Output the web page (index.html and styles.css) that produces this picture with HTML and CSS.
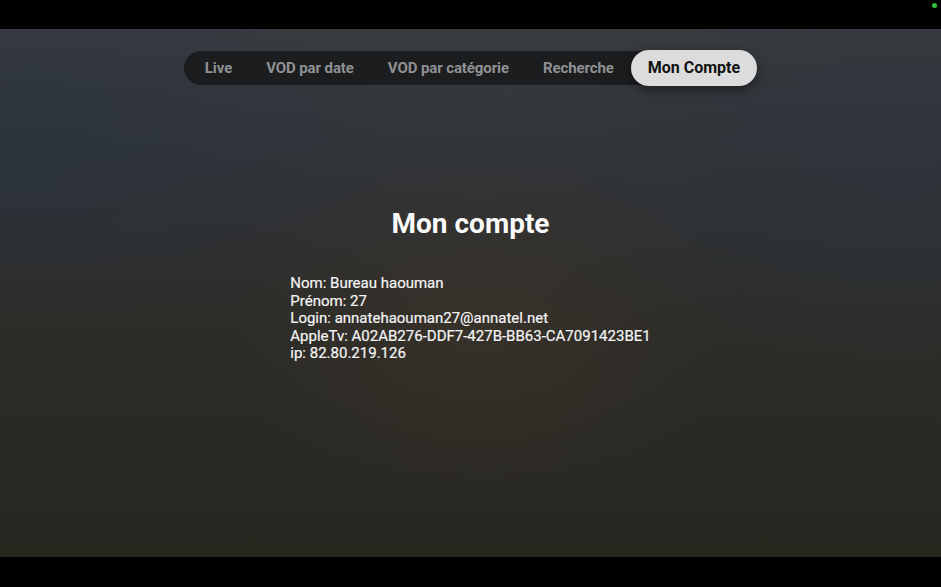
FILE: index.html
```html
<!DOCTYPE html>
<html lang="fr">
<head>
<meta charset="utf-8">
<title>Mon compte</title>
<link rel="stylesheet" href="styles.css">
</head>
<body>
<div class="screen">
  <div class="bar-top"><span class="dot"></span></div>
  <main class="stage">
    <nav class="tabs">
      <span class="tab">Live</span>
      <span class="tab">VOD par date</span>
      <span class="tab">VOD par catégorie</span>
      <span class="tab">Recherche</span>
      <span class="tab active">Mon Compte</span>
    </nav>
    <h1 class="title">Mon compte</h1>
    <div class="info">
      <div>Nom: Bureau haouman</div>
      <div>Prénom: 27</div>
      <div>Login: annatehaouman27@annatel.net</div>
      <div>AppleTv: A02AB276-DDF7-427B-BB63-CA7091423BE1</div>
      <div>ip: 82.80.219.126</div>
    </div>
  </main>
  <div class="bar-bottom"></div>
</div>
</body>
</html>
```
FILE: styles.css
```css
html, body {
  margin: 0;
  padding: 0;
  background: #000;
}
.screen {
  width: 941px;
  height: 587px;
  display: flex;
  flex-direction: column;
  font-family: Roboto, "Noto Sans", sans-serif;
  overflow: hidden;
}
.bar-top {
  height: 29px;
  background: #000;
  position: relative;
  flex: none;
}
.dot {
  position: absolute;
  right: 4px;
  top: 3px;
  width: 5px;
  height: 5px;
  border-radius: 50%;
  background: #2fc23a;
}
.bar-bottom {
  height: 30px;
  background: #000;
  flex: none;
}
.stage {
  flex: 1;
  display: flex;
  flex-direction: column;
  align-items: center;
  background:
    radial-gradient(ellipse 360px 260px at 480px 300px, rgba(62, 54, 42, 0.55), rgba(62, 54, 42, 0) 70%),
    radial-gradient(ellipse 500px 220px at 0px 120px, rgba(40, 50, 62, 0.6), rgba(40, 50, 62, 0) 80%),
    radial-gradient(ellipse 420px 260px at 900px 150px, rgba(44, 52, 60, 0.6), rgba(44, 52, 60, 0) 80%),
    linear-gradient(180deg, #383c41 0%, #32353a 22%, #2d2c29 55%, #27261f 100%);
}
.tabs {
  margin-top: 22px;
  display: flex;
  align-items: center;
  height: 34px;
  background: #1b1d1f;
  border-radius: 17px;
  padding-left: 4px;
}
.tab {
  padding: 0 17px;
  font-size: 15px;
  font-weight: 700;
  letter-spacing: -0.1px;
  color: #8f9193;
  line-height: 34px;
  white-space: nowrap;
}
.tab.active {
  background: #dcdcdc;
  color: #121212;
  font-size: 16px;
  letter-spacing: 0;
  border-radius: 18px;
  height: 36px;
  line-height: 36px;
  padding: 0 17px 0 17px;
  box-shadow: 0 4px 12px rgba(0, 0, 0, 0.45);
}
.title {
  margin: 122px 0 0;
  font-size: 28px;
  font-weight: 700;
  color: #fafafa;
  line-height: 34px;
}
.info {
  margin-top: 34px;
  font-size: 15px;
  font-weight: 400;
  color: #f4f4f4;
  line-height: 17.5px;
  -webkit-text-stroke: 0.2px #f4f4f4;
}
```
